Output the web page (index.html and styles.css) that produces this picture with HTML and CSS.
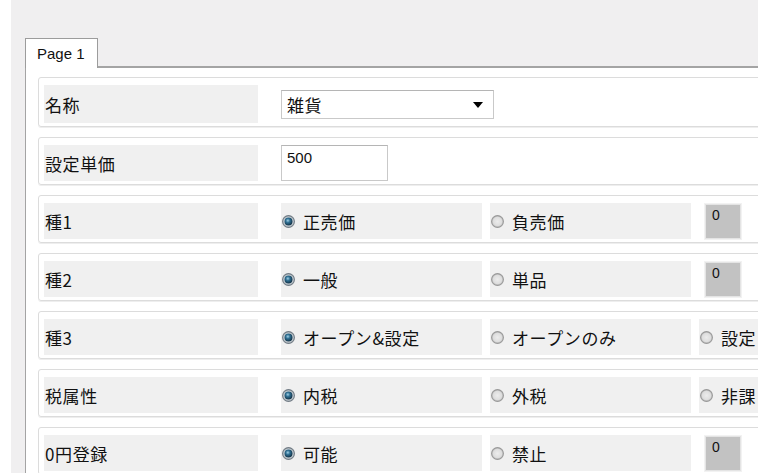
FILE: index.html
```html
<!DOCTYPE html>
<html lang="ja">
<head>
<meta charset="utf-8">
<title>Page 1</title>
<link rel="stylesheet" href="styles.css">
</head>
<body>
<svg class="defs" width="0" height="0" aria-hidden="true">
  <defs>
    <radialGradient id="dot" cx="0.42" cy="0.38" r="0.65">
      <stop offset="0" stop-color="#9fd0e6"/>
      <stop offset="0.4" stop-color="#2f6f92"/>
      <stop offset="1" stop-color="#0f2c40"/>
    </radialGradient>
    <radialGradient id="ring" cx="0.5" cy="0.5" r="0.5">
      <stop offset="0.55" stop-color="#e9eef1"/>
      <stop offset="1" stop-color="#a9b3bb"/>
    </radialGradient>
    <radialGradient id="off" cx="0.5" cy="0.5" r="0.5">
      <stop offset="0" stop-color="#ececec"/>
      <stop offset="0.7" stop-color="#dedede"/>
      <stop offset="1" stop-color="#bdbdbd"/>
    </radialGradient>
    <symbol id="r-on" viewBox="0 0 13 13">
      <circle cx="6.5" cy="6.5" r="5.9" fill="url(#ring)" stroke="#737d86" stroke-width="1.1"/>
      <circle cx="6.5" cy="6.5" r="4" fill="url(#dot)"/>
    </symbol>
    <symbol id="r-off" viewBox="0 0 13 13">
      <circle cx="6.5" cy="6.5" r="5.9" fill="url(#off)" stroke="#9a9a9a" stroke-width="1.1"/>
    </symbol>
  </defs>
</svg>
<div class="frame">
  <div class="window">
    <div class="tabbar">
      <div class="tab">Page 1</div>
      <div class="tab-fill"></div>
    </div>
    <div class="panel">
      <div class="row row-tall">
        <div class="label">名称</div>
        <div class="select"><span>雑貨</span><span class="arrow"></span></div>
      </div>
      <div class="row">
        <div class="label">設定単価</div>
        <div class="input">500</div>
      </div>
      <div class="row">
        <div class="label">種1</div>
        <div class="opt"><svg class="radio"><use href="#r-on"/></svg>正売価</div>
        <div class="opt"><svg class="radio"><use href="#r-off"/></svg>負売価</div>
        <div class="numcell"><div class="num">0</div></div>
      </div>
      <div class="row">
        <div class="label">種2</div>
        <div class="opt"><svg class="radio"><use href="#r-on"/></svg>一般</div>
        <div class="opt"><svg class="radio"><use href="#r-off"/></svg>単品</div>
        <div class="numcell"><div class="num">0</div></div>
      </div>
      <div class="row">
        <div class="label">種3</div>
        <div class="opt"><svg class="radio"><use href="#r-on"/></svg>オープン&amp;設定</div>
        <div class="opt"><svg class="radio"><use href="#r-off"/></svg>オープンのみ</div>
        <div class="opt"><svg class="radio"><use href="#r-off"/></svg>設定</div>
      </div>
      <div class="row">
        <div class="label">税属性</div>
        <div class="opt"><svg class="radio"><use href="#r-on"/></svg>内税</div>
        <div class="opt"><svg class="radio"><use href="#r-off"/></svg>外税</div>
        <div class="opt"><svg class="radio"><use href="#r-off"/></svg>非課</div>
      </div>
      <div class="row">
        <div class="label">0円登録</div>
        <div class="opt"><svg class="radio"><use href="#r-on"/></svg>可能</div>
        <div class="opt"><svg class="radio"><use href="#r-off"/></svg>禁止</div>
        <div class="numcell"><div class="num">0</div></div>
      </div>
    </div>
  </div>
</div>
</body>
</html>
```
FILE: styles.css
```css
* { box-sizing: border-box; }
html, body {
  margin: 0;
  padding: 0;
  width: 770px;
  height: 473px;
  overflow: hidden;
  background: #ffffff;
}
body {
  font-family: "Noto Sans CJK JP", "Noto Sans", sans-serif;
  color: #111;
}
.defs {
  display: block;
  width: 0;
  height: 0;
  overflow: hidden;
}
.frame {
  height: 473px;
  padding: 0 12px 0 11px;
  background: #ffffff;
}
.window {
  height: 473px;
  background: #f0eff0;
  padding: 38px 0 0 14px;
  overflow: hidden;
  display: flex;
  flex-direction: column;
}
.tabbar {
  display: flex;
  height: 30px;
  flex: none;
}
.tab {
  width: 73px;
  height: 30px;
  border: 1px solid #9c9c9c;
  border-bottom: none;
  background: #ffffff;
  font-family: "Liberation Sans", Arial, sans-serif;
  font-size: 15px;
  line-height: 29px;
  padding-left: 11px;
  color: #111;
}
.tab-fill {
  flex: 1;
  border-bottom: 2px solid #a4a4a4;
}
.panel {
  flex: 1;
  background: #ffffff;
  border-left: 1px solid #a4a4a4;
  padding: 9px 0 0 12px;
  overflow: hidden;
}
.row {
  width: 740px;
  height: 48px;
  border: 1px solid #dcdcdc;
  border-radius: 3px;
  box-shadow: 0 1px 0 #eeeeee;
  padding: 7px 0 3px 5px;
  margin-bottom: 10px;
  display: flex;
  align-items: stretch;
  gap: 8px;
  font-size: 17px;
  letter-spacing: 0.6px;
}
.row-tall { height: 50px; }
.label {
  width: 214px;
  flex: none;
  background: #f0f0f0;
  display: flex;
  align-items: center;
  padding-left: 1px;
  margin-right: 15px;
}
.select {
  width: 213px;
  height: 29px;
  align-self: center;
  border: 1px solid #c9c9c9;
  border-top-color: #b5b5b5;
  background: #ffffff;
  display: flex;
  align-items: center;
  justify-content: space-between;
  padding: 0 10px 0 5px;
}
.arrow {
  width: 0;
  height: 0;
  border-left: 5px solid transparent;
  border-right: 5px solid transparent;
  border-top: 6px solid #000;
  margin-top: 2px;
}
.input {
  width: 107px;
  border: 1px solid #c9c9c9;
  border-top-color: #b5b5b5;
  background: #ffffff;
  font-family: "Liberation Sans", Arial, sans-serif;
  font-size: 15px;
  letter-spacing: 0;
  padding: 4px 0 0 5px;
  line-height: 16px;
}
.opt {
  width: 201px;
  flex: none;
  background: #f0f0f0;
  display: flex;
  align-items: center;
  padding-left: 1px;
  white-space: nowrap;
}
.radio {
  width: 13px;
  height: 13px;
  flex: none;
  margin-right: 8px;
}
.numcell {
  width: 60px;
  flex: none;
  padding: 1px 0 2px 6px;
}
.num {
  width: 36px;
  height: 35px;
  background: #c2c2c2;
  border: 1px solid #e4e4e4;
  outline: 1px solid #f2f2f2;
  font-family: "Liberation Sans", Arial, sans-serif;
  font-size: 14px;
  letter-spacing: 0;
  line-height: 16px;
  padding: 2px 0 0 6px;
  color: #111;
}
```
